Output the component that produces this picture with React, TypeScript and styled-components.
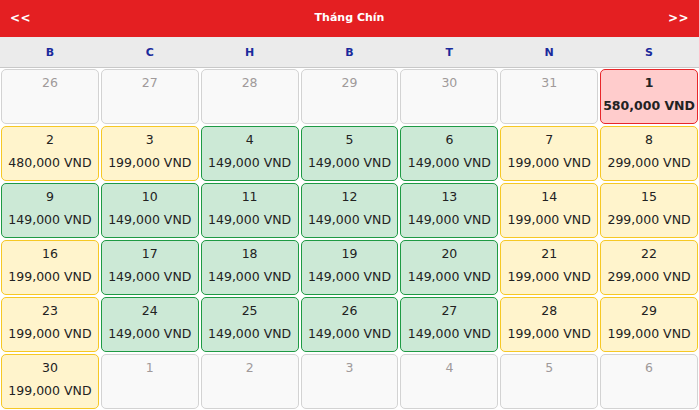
import React from 'react'
import styled, { createGlobalStyle } from 'styled-components'

const GlobalStyle = createGlobalStyle`
    html, body {
        margin: 0;
        padding: 0;
        background: #fff;
        font-family: "DejaVu Sans", Verdana, sans-serif;
    }
`

type Kind = 'off' | 'cheap' | 'mid' | 'high'

const Wrapper = styled.div`
    width: 699px;
    height: 410px;
    overflow: hidden;
`

const Header = styled.div`
    height: 37px;
    background: #e41f22;
    color: #fff;
    display: flex;
    align-items: center;
    justify-content: space-between;
    padding: 0 10px 2px;
    box-sizing: border-box;
    font-weight: bold;
    font-size: 11px;
`

const NavButton = styled.span`
    font-size: 12px;
    letter-spacing: 0.5px;
    cursor: pointer;
`

const Title = styled.span``

const WeekRow = styled.div`
    display: grid;
    grid-template-columns: repeat(7, 1fr);
    height: 30px;
    background: #ebebeb;
    border-bottom: 1px solid #c8c8c8;
`

const WeekDay = styled.div`
    display: flex;
    align-items: center;
    justify-content: center;
    color: #1a2a9c;
    font-weight: bold;
    font-size: 11px;
`

const Grid = styled.div`
    display: grid;
    grid-template-columns: repeat(7, 1fr);
    grid-auto-rows: 55px;
    gap: 2px;
    padding: 1px 1px;
`

const colors: Record<Kind, { bg: string; border: string }> = {
    off: { bg: '#f9f9f9', border: '#d3d3d3' },
    cheap: { bg: '#cce9d6', border: '#1e9a44' },
    mid: { bg: '#fff4cc', border: '#f6c825' },
    high: { bg: '#ffcccc', border: '#e8262a' },
}

const Cell = styled.div<{ $kind: Kind; $bold?: boolean }>`
    background: ${p => colors[p.$kind].bg};
    border: 1px solid ${p => colors[p.$kind].border};
    border-radius: 5px;
    box-sizing: border-box;
    display: flex;
    flex-direction: column;
    align-items: center;
    padding-top: 5px;
    font-size: 12.5px;
    color: #222;
    font-weight: ${p => (p.$bold ? 'bold' : 'normal')};
`

const DayNum = styled.div<{ $muted?: boolean }>`
    height: 16px;
    line-height: 16px;
    color: ${p => (p.$muted ? '#a09a9a' : 'inherit')};
`

const Price = styled.div`
    margin-top: 7px;
    line-height: 16px;
`

type Day = { n: number; kind: Kind; price?: string }

const P149 = '149,000 VND'
const P199 = '199,000 VND'
const P299 = '299,000 VND'

const days: Day[] = [
    { n: 26, kind: 'off' }, { n: 27, kind: 'off' }, { n: 28, kind: 'off' }, { n: 29, kind: 'off' },
    { n: 30, kind: 'off' }, { n: 31, kind: 'off' }, { n: 1, kind: 'high', price: '580,000 VND' },
    { n: 2, kind: 'mid', price: '480,000 VND' }, { n: 3, kind: 'mid', price: P199 },
    { n: 4, kind: 'cheap', price: P149 }, { n: 5, kind: 'cheap', price: P149 },
    { n: 6, kind: 'cheap', price: P149 }, { n: 7, kind: 'mid', price: P199 }, { n: 8, kind: 'mid', price: P299 },
    { n: 9, kind: 'cheap', price: P149 }, { n: 10, kind: 'cheap', price: P149 },
    { n: 11, kind: 'cheap', price: P149 }, { n: 12, kind: 'cheap', price: P149 },
    { n: 13, kind: 'cheap', price: P149 }, { n: 14, kind: 'mid', price: P199 }, { n: 15, kind: 'mid', price: P299 },
    { n: 16, kind: 'mid', price: P199 }, { n: 17, kind: 'cheap', price: P149 },
    { n: 18, kind: 'cheap', price: P149 }, { n: 19, kind: 'cheap', price: P149 },
    { n: 20, kind: 'cheap', price: P149 }, { n: 21, kind: 'mid', price: P199 }, { n: 22, kind: 'mid', price: P299 },
    { n: 23, kind: 'mid', price: P199 }, { n: 24, kind: 'cheap', price: P149 },
    { n: 25, kind: 'cheap', price: P149 }, { n: 26, kind: 'cheap', price: P149 },
    { n: 27, kind: 'cheap', price: P149 }, { n: 28, kind: 'mid', price: P199 }, { n: 29, kind: 'mid', price: P199 },
    { n: 30, kind: 'mid', price: P199 }, { n: 1, kind: 'off' }, { n: 2, kind: 'off' }, { n: 3, kind: 'off' },
    { n: 4, kind: 'off' }, { n: 5, kind: 'off' }, { n: 6, kind: 'off' },
]

const weekDays = ['B', 'C', 'H', 'B', 'T', 'N', 'S']

export default function App() {
    return (
        <Wrapper>
            <GlobalStyle />
            <Header>
                <NavButton>&lt;&lt;</NavButton>
                <Title>Tháng Chín</Title>
                <NavButton>&gt;&gt;</NavButton>
            </Header>
            <WeekRow>
                {weekDays.map((d, i) => <WeekDay key={i}>{d}</WeekDay>)}
            </WeekRow>
            <Grid>
                {days.map((d, i) => (
                    <Cell key={i} $kind={d.kind} $bold={d.kind === 'high'}>
                        <DayNum $muted={d.kind === 'off'}>{d.n}</DayNum>
                        {d.price && <Price>{d.price}</Price>}
                    </Cell>
                ))}
            </Grid>
        </Wrapper>
    )
}
